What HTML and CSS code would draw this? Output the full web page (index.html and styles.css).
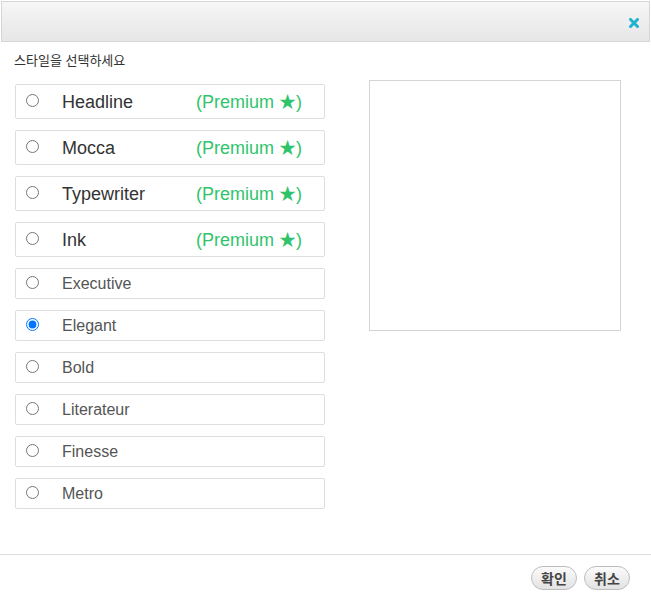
FILE: index.html
```html
<!DOCTYPE html>
<html lang="ko">
<head>
    <meta charset="UTF-8">
    <meta name="viewport" content="width=device-width, initial-scale=1.0">
    <title>스타일 선택</title>
    <link rel="stylesheet" href="styles.css">
</head>
<body>
    <div class="dialog-header">
        <button class="close-btn" title="닫기">
            <svg width="10" height="10" viewBox="0 0 10 10">
                <path d="M1.5 1.5 L8.5 8.5 M8.5 1.5 L1.5 8.5" stroke="#1fb3d2" stroke-width="3" stroke-linecap="square"/>
            </svg>
        </button>
    </div>

    <div class="dialog-body">
        <p class="title">스타일을 선택하세요</p>

        <div class="content">
            <ul class="style-list">
                <li class="style-item premium">
                    <input type="radio" name="style" id="s1">
                    <label for="s1"><span class="name">Headline</span><span class="badge">(Premium <span class="star">★</span>)</span></label>
                </li>
                <li class="style-item premium">
                    <input type="radio" name="style" id="s2">
                    <label for="s2"><span class="name">Mocca</span><span class="badge">(Premium <span class="star">★</span>)</span></label>
                </li>
                <li class="style-item premium">
                    <input type="radio" name="style" id="s3">
                    <label for="s3"><span class="name">Typewriter</span><span class="badge">(Premium <span class="star">★</span>)</span></label>
                </li>
                <li class="style-item premium">
                    <input type="radio" name="style" id="s4">
                    <label for="s4"><span class="name">Ink</span><span class="badge">(Premium <span class="star">★</span>)</span></label>
                </li>
                <li class="style-item">
                    <input type="radio" name="style" id="s5">
                    <label for="s5"><span class="name">Executive</span></label>
                </li>
                <li class="style-item">
                    <input type="radio" name="style" id="s6" checked>
                    <label for="s6"><span class="name">Elegant</span></label>
                </li>
                <li class="style-item">
                    <input type="radio" name="style" id="s7">
                    <label for="s7"><span class="name">Bold</span></label>
                </li>
                <li class="style-item">
                    <input type="radio" name="style" id="s8">
                    <label for="s8"><span class="name">Literateur</span></label>
                </li>
                <li class="style-item">
                    <input type="radio" name="style" id="s9">
                    <label for="s9"><span class="name">Finesse</span></label>
                </li>
                <li class="style-item">
                    <input type="radio" name="style" id="s10">
                    <label for="s10"><span class="name">Metro</span></label>
                </li>
            </ul>

            <div class="preview"></div>
        </div>
    </div>

    <div class="dialog-footer">
        <button class="btn">확인</button>
        <button class="btn">취소</button>
    </div>
</body>
</html>
```

FILE: styles.css
```css
body {
    font-family: "Liberation Sans", "Noto Sans CJK KR", sans-serif;
    margin: 0;
    height: 606px;
    display: flex;
    flex-direction: column;
    background-color: #fff;
    color: #333;
}

.dialog-header {
    margin: 1px 1px 0 1px;
    height: 39px;
    border: 1px solid #d6d6d6;
    background: linear-gradient(#f6f6f6, #e6e6e6);
    display: flex;
    align-items: center;
    justify-content: flex-end;
}

.close-btn {
    border: none;
    background: none;
    padding: 0;
    margin: 2px 10px 0 0;
    width: 10px;
    height: 10px;
    display: flex;
}

.dialog-body {
    flex: 1;
}

.title {
    margin: 10px 0 0 14px;
    font-size: 13px;
    line-height: 16px;
    color: #333;
    font-family: "Noto Sans CJK KR", sans-serif;
}

.content {
    display: flex;
    align-items: flex-start;
    gap: 44px;
    padding-left: 15px;
}

.style-list {
    list-style: none;
    margin: 16px 0 0 0;
    padding: 0;
    width: 310px;
    display: flex;
    flex-direction: column;
    gap: 11px;
}

.style-item {
    display: flex;
    align-items: center;
    height: 29px;
    padding-left: 10px;
    border: 1px solid #dedede;
    border-radius: 2px;
    font-size: 16px;
    line-height: 20px;
    color: #555;
}

.style-item.premium {
    height: 33px;
    font-size: 18px;
    line-height: 22px;
    color: #333;
}

.style-item input {
    width: 13px;
    height: 13px;
    margin: 0 23px 2px 0;
}

.style-item label {
    display: flex;
    align-items: baseline;
}

.name {
    width: 134px;
}

.badge {
    color: #2fc46b;
}

.star {
    font-size: 17px;
    line-height: 16px;
}

.preview {
    margin-top: 12px;
    width: 250px;
    height: 249px;
    border: 1px solid #d4d4d4;
}

.dialog-footer {
    height: 40px;
    border-top: 1px solid #dedede;
    padding: 11px 21px 0 0;
    display: flex;
    justify-content: flex-end;
    align-items: flex-start;
    gap: 7px;
}

.btn {
    width: 46px;
    height: 24px;
    padding: 0;
    border: 1px solid #bdbdbd;
    border-radius: 12px;
    background: linear-gradient(#fbfbfb, #e2e2e2);
    font-family: "Noto Sans CJK KR", sans-serif;
    font-weight: bold;
    font-size: 14px;
    line-height: 20px;
    color: #444;
}
```
